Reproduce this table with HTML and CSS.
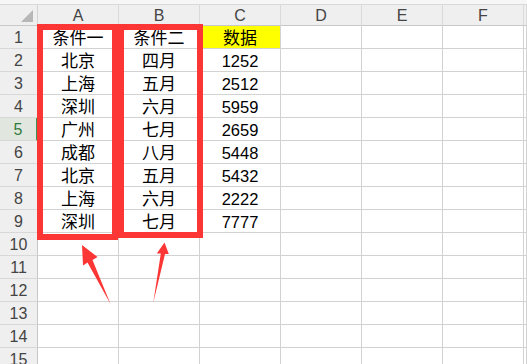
FILE: index.html
```html
<!DOCTYPE html>
<html lang="zh">
<head>
<meta charset="utf-8">
<link rel="stylesheet" href="styles.css">
</head>
<body>
<div class="sheet">
  <div class="topbar"></div>
  <div class="grid">
    <div class="hd corner"><span class="tri"></span></div>
    <div class="hd col">A</div><div class="hd col">B</div><div class="hd col">C</div><div class="hd col">D</div><div class="hd col">E</div><div class="hd col">F</div><div class="hd col"></div>

    <div class="hd row">1</div><div class="c">条件一</div><div class="c">条件二</div><div class="c yellow">数据</div><div class="c"></div><div class="c"></div><div class="c"></div><div class="c"></div>
    <div class="hd row">2</div><div class="c">北京</div><div class="c">四月</div><div class="c num">1252</div><div class="c"></div><div class="c"></div><div class="c"></div><div class="c"></div>
    <div class="hd row">3</div><div class="c">上海</div><div class="c">五月</div><div class="c num">2512</div><div class="c"></div><div class="c"></div><div class="c"></div><div class="c"></div>
    <div class="hd row">4</div><div class="c">深圳</div><div class="c">六月</div><div class="c num">5959</div><div class="c"></div><div class="c"></div><div class="c"></div><div class="c"></div>
    <div class="hd row sel">5</div><div class="c">广州</div><div class="c">七月</div><div class="c num">2659</div><div class="c"></div><div class="c"></div><div class="c"></div><div class="c"></div>
    <div class="hd row">6</div><div class="c">成都</div><div class="c">八月</div><div class="c num">5448</div><div class="c"></div><div class="c"></div><div class="c"></div><div class="c"></div>
    <div class="hd row">7</div><div class="c">北京</div><div class="c">五月</div><div class="c num">5432</div><div class="c"></div><div class="c"></div><div class="c"></div><div class="c"></div>
    <div class="hd row">8</div><div class="c">上海</div><div class="c">六月</div><div class="c num">2222</div><div class="c"></div><div class="c"></div><div class="c"></div><div class="c"></div>
    <div class="hd row">9</div><div class="c">深圳</div><div class="c">七月</div><div class="c num">7777</div><div class="c"></div><div class="c"></div><div class="c"></div><div class="c"></div>
    <div class="hd row">10</div><div class="c"></div><div class="c"></div><div class="c"></div><div class="c"></div><div class="c"></div><div class="c"></div><div class="c"></div>
    <div class="hd row">11</div><div class="c"></div><div class="c"></div><div class="c"></div><div class="c"></div><div class="c"></div><div class="c"></div><div class="c"></div>
    <div class="hd row">12</div><div class="c"></div><div class="c"></div><div class="c"></div><div class="c"></div><div class="c"></div><div class="c"></div><div class="c"></div>
    <div class="hd row">13</div><div class="c"></div><div class="c"></div><div class="c"></div><div class="c"></div><div class="c"></div><div class="c"></div><div class="c"></div>
    <div class="hd row">14</div><div class="c"></div><div class="c"></div><div class="c"></div><div class="c"></div><div class="c"></div><div class="c"></div><div class="c"></div>
    <div class="hd row">15</div><div class="c"></div><div class="c"></div><div class="c"></div><div class="c"></div><div class="c"></div><div class="c"></div><div class="c"></div>
  </div>

  <div class="box box-a"></div>
  <div class="box box-b"></div>
  <svg class="arrows" width="527" height="364" viewBox="0 0 527 364">
    <polygon points="82,245 97.5,257 92.5,260 110.5,304 87.5,262.5 83,265.5" fill="#fc3535"/>
    <polygon points="164.5,242.5 168.8,254 165,254 153.3,302.5 160.8,253.6 156.8,253.4" fill="#fc3535"/>
  </svg>
</div>
</body>
</html>
```

FILE: styles.css
```css
html, body {
  margin: 0;
  padding: 0;
  background: #ffffff;
}

.sheet {
  position: relative;
  width: 527px;
  height: 364px;
  overflow: hidden;
  font-family: "Liberation Sans", "Noto Sans CJK SC", sans-serif;
}

.topbar {
  height: 4px;
  background: #f6f6f6;
  border-bottom: 1px solid #d9d9d9;
}

.grid {
  display: grid;
  grid-template-columns: 38px repeat(6, 81px) 1fr;
  grid-template-rows: 21px;
  grid-auto-rows: 23px;
}

.hd {
  box-sizing: border-box;
  background: #efefef;
  border-right: 1px solid #d4d4d4;
  border-bottom: 1px solid #d4d4d4;
  color: #444444;
  font-size: 16px;
  display: flex;
  align-items: center;
  justify-content: center;
  line-height: 1;
}

.hd.col {
  border-right-color: #dadada;
  border-bottom-color: #c8c8c8;
  padding-top: 1px;
}

.hd.row {
  border-right-color: #c8c8c8;
  border-bottom-color: #d8d8d8;
  padding-top: 2px;
}

.hd.sel {
  background: #e1e6df;
  color: #2f7d3a;
  border-right: 2px solid #3f9150;
}

.corner {
  position: relative;
  border-bottom-color: #c8c8c8;
}

.tri {
  position: absolute;
  left: 21px;
  top: 5px;
  width: 0;
  height: 0;
  border-left: 12px solid transparent;
  border-bottom: 12px solid #b7b7b7;
}

.c {
  box-sizing: border-box;
  border-right: 1px solid #d2d2d2;
  border-bottom: 1px solid #d2d2d2;
  font-size: 17px;
  color: #000000;
  display: flex;
  align-items: center;
  justify-content: center;
  line-height: 1;
  padding-top: 2px;
}

.c.num {
  font-size: 16.5px;
}

.c.yellow {
  background: #ffff00;
}

.box {
  position: absolute;
  box-sizing: border-box;
  border: 6px solid #fc3535;
}

.box-a {
  left: 37px;
  top: 24px;
  width: 81px;
  height: 216px;
}

.box-b {
  left: 118px;
  top: 24px;
  width: 85px;
  height: 214px;
}

.arrows {
  position: absolute;
  left: 0;
  top: 0;
}
```
